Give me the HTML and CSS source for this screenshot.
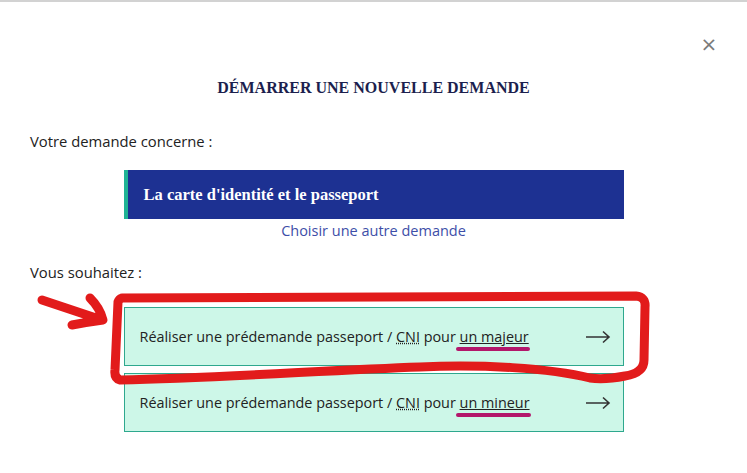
FILE: index.html
```html
<!DOCTYPE html>
<html lang="fr">
<head>
  <meta charset="UTF-8">
  <meta name="viewport" content="width=device-width, initial-scale=1.0">
  <title>Démarrer une nouvelle demande</title>
  <link rel="stylesheet" href="styles.css">
</head>
<body>
  <div class="modal">
    <div class="close-row">
      <button class="close" aria-label="Fermer">&times;</button>
    </div>

    <h1 class="title">DÉMARRER UNE NOUVELLE DEMANDE</h1>

    <p class="label">Votre demande concerne :</p>

    <div class="choices">
      <div class="selected">La carte d'identité et le passeport</div>
      <a class="other" href="#">Choisir une autre demande</a>
    </div>

    <p class="label label-wish">Vous souhaitez :</p>

    <div class="choices">
      <a class="option" href="#">
        <span>Réaliser une prédemande passeport / <abbr title="Carte nationale d'identité">CNI</abbr> pour <span class="mark">un majeur</span></span>
        <svg class="go" width="26" height="14" viewBox="0 0 26 14"><path d="M1 7h23M18 1.5l6 5.5-6 5.5" fill="none" stroke="#333" stroke-width="1.6"/></svg>
      </a>
      <a class="option" href="#">
        <span>Réaliser une prédemande passeport / <abbr title="Carte nationale d'identité">CNI</abbr> pour <span class="mark">un mineur</span></span>
        <svg class="go" width="26" height="14" viewBox="0 0 26 14"><path d="M1 7h23M18 1.5l6 5.5-6 5.5" fill="none" stroke="#333" stroke-width="1.6"/></svg>
      </a>
    </div>
  </div>

  <!-- hand drawn annotation over the page -->
  <svg class="scribble" width="747" height="473" viewBox="0 0 747 473">
    <g fill="none" stroke="#e21b1b" stroke-width="9" stroke-linecap="round" stroke-linejoin="round">
      <path d="M42 298 L102 318 M90 296 Q100 306 103 318 Q88 320 72 323"/>
      <path d="M122 296 Q380 294 636 294 Q646 295 645 305 L644 358 Q644 371 625 374 Q605 378 590 376 C550 366 480 362 420 365 C330 368 220 376 120 378 Q114 376 115 368 L118 300 Q119 297 122 296"/>
    </g>
  </svg>
</body>
</html>
```

FILE: styles.css
```css
body {
  margin: 0;
  padding: 0;
  position: relative;
  background: #ffffff;
  border-top: 2px solid #d2d2d2;
  font-family: "Open Sans", "Liberation Sans", sans-serif;
  color: #222;
}
.modal {
  padding: 0 30px;
}
.close-row {
  display: flex;
  justify-content: flex-end;
  padding-top: 30px;
  margin-right: -2px;
}
.close {
  border: none;
  background: none;
  padding: 0;
  width: 20px;
  height: 24px;
  font-family: "DejaVu Sans", sans-serif;
  font-size: 20px;
  line-height: 24px;
  color: #7a7a7a;
  cursor: pointer;
}
.title {
  margin: 21px 0 0;
  text-align: center;
  font-family: "Liberation Serif", serif;
  font-weight: bold;
  font-size: 16px;
  line-height: 22px;
  color: #1c1f4e;
}
.label {
  margin: 32px 0 0;
  font-size: 14.8px;
  line-height: 20px;
}
.label-wish {
  margin-top: 21px;
}
.choices {
  width: 500px;
  margin: 0 auto;
  display: flex;
  flex-direction: column;
}
.selected {
  margin-top: 19px;
  height: 49px;
  box-sizing: border-box;
  display: flex;
  align-items: center;
  padding-left: 16px;
  background: #1d3192;
  border-left: 4px solid #1fb394;
  font-family: "Liberation Serif", serif;
  font-weight: bold;
  font-size: 16.5px;
  color: #fff;
}
.other {
  margin-top: 2px;
  text-align: center;
  font-size: 14.5px;
  line-height: 20px;
  color: #3d4ea8;
  text-decoration: none;
}
.option {
  height: 59px;
  box-sizing: border-box;
  display: flex;
  align-items: center;
  justify-content: space-between;
  padding: 0 12px 0 15px;
  background: #cdf7e8;
  border: 1px solid #2ea88e;
  font-size: 14.4px;
  color: #222;
  text-decoration: none;
}
.option:first-child {
  margin-top: 25px;
}
.option + .option {
  margin-top: 7px;
}
abbr {
  text-decoration: underline dotted;
}
.mark {
  position: relative;
  text-decoration: underline;
}
.mark::after {
  content: "";
  position: absolute;
  left: -4px;
  right: -1px;
  bottom: -5px;
  height: 4px;
  border-radius: 2px;
  background: #b3176b;
}
.scribble {
  position: absolute;
  top: 0;
  left: 0;
  pointer-events: none;
}
```
